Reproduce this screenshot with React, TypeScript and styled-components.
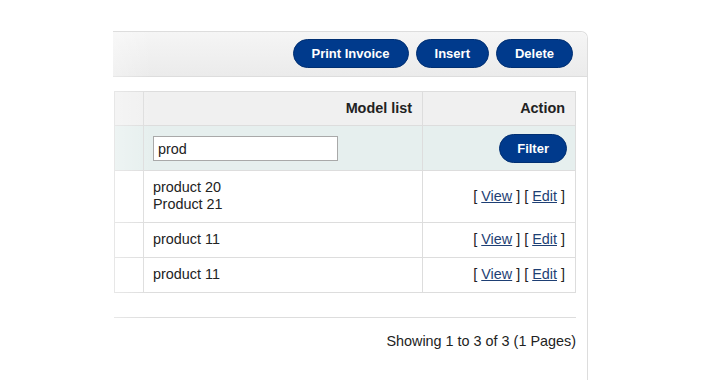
import styled, { createGlobalStyle } from "styled-components";

const GlobalStyle = createGlobalStyle`
  html, body {
    margin: 0;
    padding: 0;
    background: #ffffff;
  }
  body {
    font-family: "Liberation Sans", Arial, sans-serif;
    font-size: 14.4px;
    color: #222222;
  }
`;

type Row = { models: string[] };

const rows: Row[] = [
  { models: ["product 20", "Product 21"] },
  { models: ["product 11"] },
  { models: ["product 11"] },
];

export default function App() {
  return (
    <>
      <GlobalStyle />
      <Page>
        <Clip>
          <Panel>
            <Heading>
              <Button>Print Invoice</Button>
              <Button>Insert</Button>
              <Button>Delete</Button>
            </Heading>
            <Content>
              <List>
                <thead>
                  <tr>
                    <HeadCell />
                    <HeadCell $align="right">Model list</HeadCell>
                    <HeadCell $align="right">Action</HeadCell>
                  </tr>
                </thead>
                <tbody>
                  <FilterRow>
                    <FilterCell />
                    <FilterCell>
                      <SearchInput defaultValue="prod" />
                    </FilterCell>
                    <FilterCell $align="right">
                      <FilterButton>Filter</FilterButton>
                    </FilterCell>
                  </FilterRow>
                  {rows.map((row, i) => (
                    <tr key={i}>
                      <Cell />
                      <Cell>
                        {row.models.map((m) => (
                          <div key={m}>{m}</div>
                        ))}
                      </Cell>
                      <Cell $align="right">
                        [ <Link href="#">View</Link> ] [ <Link href="#">Edit</Link> ]
                      </Cell>
                    </tr>
                  ))}
                </tbody>
              </List>
              <Pagination>
                <Results>Showing 1 to 3 of 3 (1 Pages)</Results>
              </Pagination>
            </Content>
            <EdgeFade />
          </Panel>
        </Clip>
      </Page>
    </>
  );
}

const Page = styled.div`
  padding-top: 31px;
  padding-left: 113px;
  height: 349px;
  overflow: hidden;
`;

const Clip = styled.div`
  width: 475px;
  height: 100%;
  overflow: hidden;
`;

const Panel = styled.div`
  position: relative;
  margin-left: -12px;
  height: 100%;
  box-sizing: border-box;
  border: 1px solid #dddddd;
  border-bottom: none;
  border-radius: 0 7px 0 0;
`;

const Heading = styled.div`
  display: flex;
  justify-content: flex-end;
  align-items: flex-start;
  gap: 7px;
  height: 45px;
  box-sizing: border-box;
  padding: 7px 14px 0 0;
  border-bottom: 1px solid #dddddd;
  border-radius: 0 7px 0 0;
  background: linear-gradient(to bottom, #f5f5f5, #ebebeb);
`;

const Button = styled.a`
  display: inline-flex;
  align-items: center;
  height: 29px;
  box-sizing: border-box;
  padding: 0 18px;
  border-radius: 15px;
  background: #003a8c;
  border: 1px solid #002f72;
  color: #ffffff;
  font-size: 13px;
  font-weight: bold;
  cursor: pointer;
`;

const FilterButton = styled(Button)`
  margin-right: -2px;
  padding: 0 17px;
`;

const Content = styled.div`
  padding: 14px 11px 0 12px;
`;

const List = styled.table`
  width: 100%;
  border-collapse: collapse;
  border-top: 1px solid #dddddd;
  border-left: 1px solid #dddddd;
  line-height: 17px;
`;

const HeadCell = styled.td<{ $align?: string }>`
  background: #f0f0f0;
  border-right: 1px solid #dddddd;
  border-bottom: 1px solid #dddddd;
  height: 33px;
  padding: 0 10px 0 9px;
  font-weight: bold;
  color: #222222;
  text-align: ${(p) => p.$align || "left"};

  &:first-child {
    width: 9px;
  }
  &:nth-child(2) {
    width: 259px;
  }
`;

const FilterRow = styled.tr`
  background: #e6efee;
`;

const FilterCell = styled.td<{ $align?: string }>`
  border-right: 1px solid #dddddd;
  border-bottom: 1px solid #dddddd;
  height: 44px;
  padding: 0 10px 0 9px;
  text-align: ${(p) => p.$align || "left"};
`;

const SearchInput = styled.input`
  display: block;
  width: 185px;
  height: 25px;
  box-sizing: border-box;
  border: 1px solid #a9a9a9;
  padding: 1px 4px 0;
  font-family: "Liberation Sans", Arial, sans-serif;
  font-size: 14.4px;
  color: #222222;
  background: #ffffff;
  outline: none;
`;

const Cell = styled.td<{ $align?: string }>`
  border-right: 1px solid #dddddd;
  border-bottom: 1px solid #dddddd;
  padding: 8px 10px 9px 9px;
  color: #222222;
  text-align: ${(p) => p.$align || "left"};
`;

const Link = styled.a`
  color: #1e3f74;
  text-decoration: underline;
`;

const Pagination = styled.div`
  margin-top: 24px;
  border-top: 1px solid #dddddd;
  padding-top: 15px;
  display: flex;
  justify-content: flex-end;
`;

const Results = styled.div`
  line-height: 17px;
  color: #222222;
`;

const EdgeFade = styled.div`
  position: absolute;
  top: 0;
  left: 0;
  bottom: 0;
  width: 50px;
  pointer-events: none;
  background: linear-gradient(
    to right,
    rgba(255, 255, 255, 0.4),
    rgba(255, 255, 255, 0)
  );
`;
